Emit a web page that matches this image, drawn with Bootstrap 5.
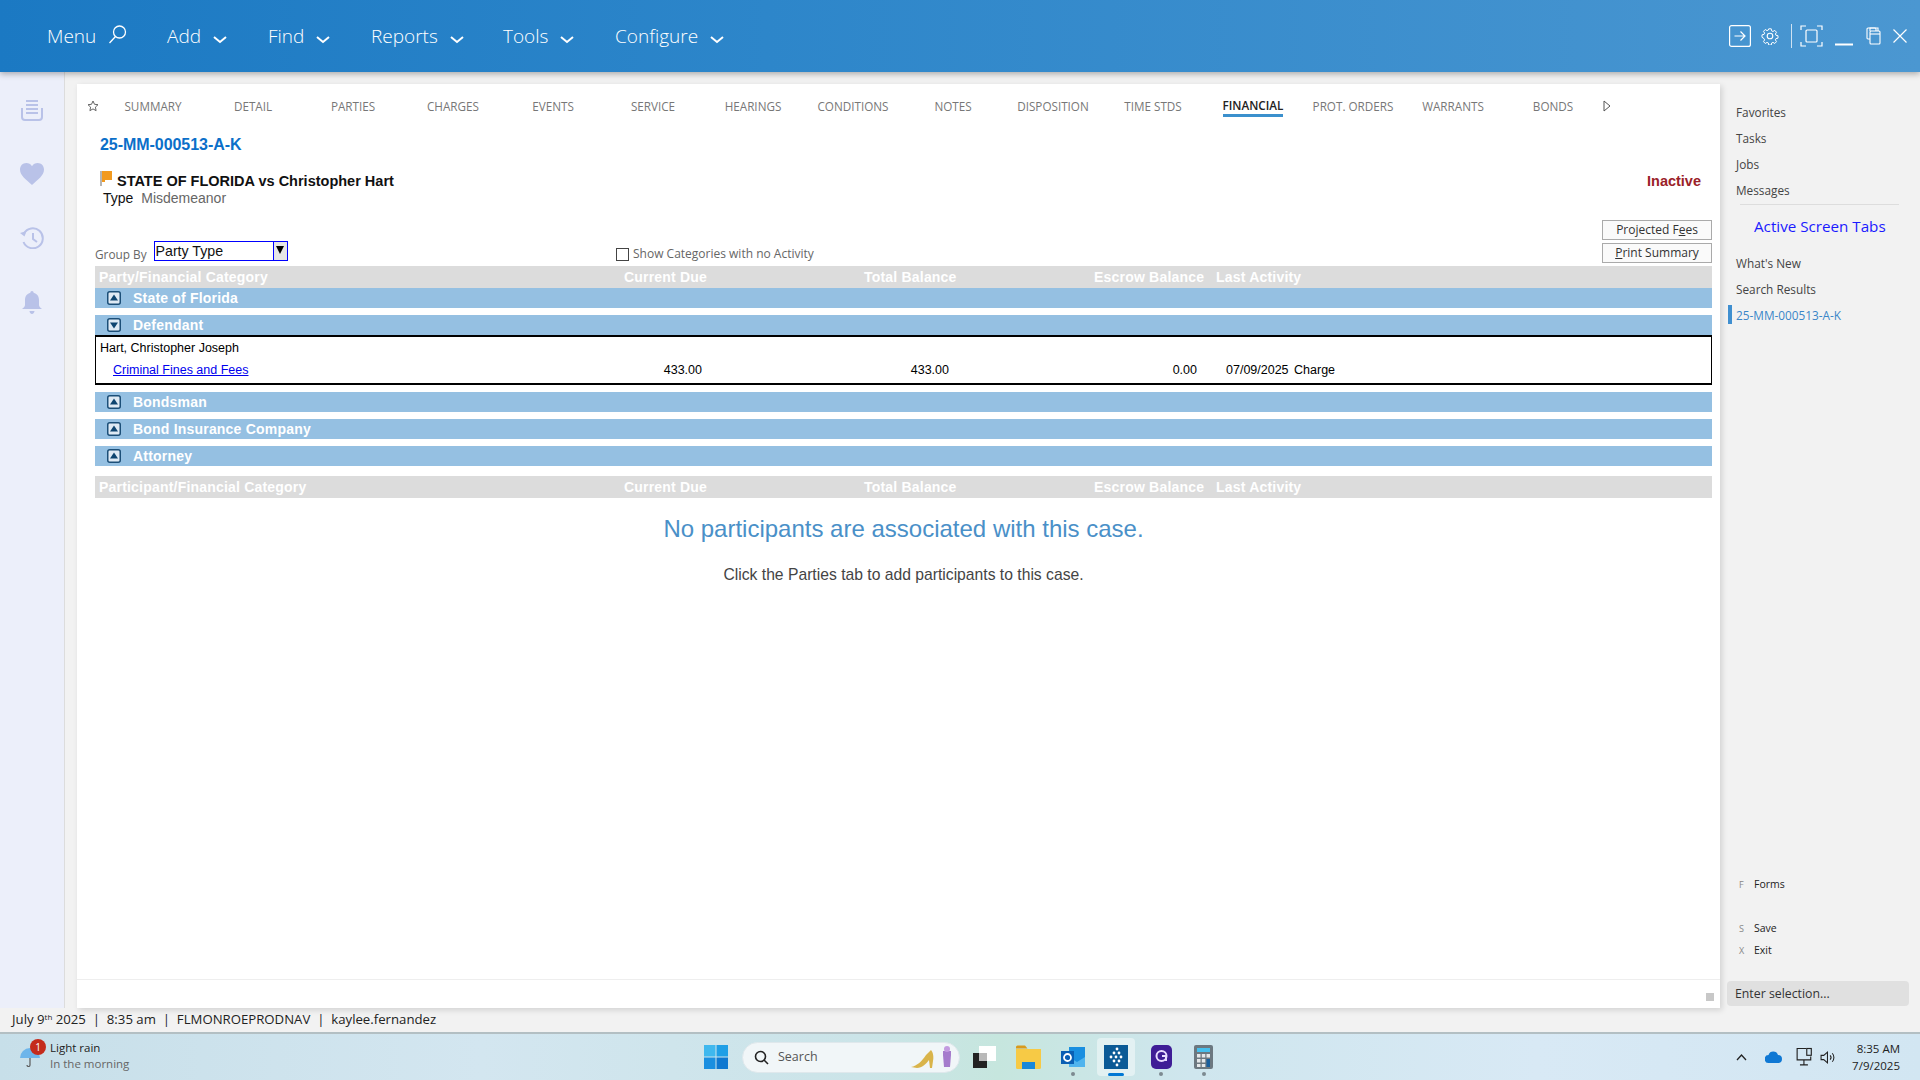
<!DOCTYPE html>
<html lang="en">
<head>
  <meta charset="UTF-8">
  <title>25-MM-000513-A-K Financial</title>
  <link href="https://cdn.jsdelivr.net/npm/bootstrap@5.3.0/dist/css/bootstrap.min.css" rel="stylesheet">
  <style>
    html, body { height: 1080px; overflow: hidden; }
    body { background: #f2f2f2; font-family: "Open Sans", sans-serif; color: #333; }

    /* top bar */
    .top-bar { height: 72px; background: linear-gradient(90deg, #1b79c3 0%, #2d86ca 40%, #4b97d1 100%); box-shadow: 0 2px 6px rgba(0,0,0,.3); position: relative; z-index: 2; color: #fff; }
    .top-menu { padding-left: 47px; font-size: 19px; font-weight: 300; }
    .top-menu > div { white-space: nowrap; }
    .top-menu svg { margin-left: 12px; vertical-align: -1px; }
    .menu-w1 { width: 120px; } .menu-w2 { width: 101px; } .menu-w3 { width: 103px; } .menu-w4 { width: 132px; } .menu-w5 { width: 112px; }
    .win-btns { padding-right: 13px; }
    .win-btns svg:nth-child(2) { margin-left: 10px; }
    .win-btns svg:nth-child(3) { margin-left: 12px; }
    .win-btns svg:nth-child(4) { margin-left: 8px; }
    .win-btns svg:nth-child(5) { margin-left: 12px; }
    .win-btns svg:nth-child(6) { margin-left: 13px; }
    .win-btns svg:nth-child(7) { margin-left: 12px; }

    /* main area */
    .main-area { height: 936px; }
    .left-rail { width: 65px; flex: none; background: #eceffa; border-right: 1px solid #dcdcdc; padding-top: 28px; }
    .left-rail svg { display: block; margin: 0 auto; }
    .rail-gap { margin-top: 42px !important; }
    .case-panel { width: 1643px; flex: none; margin: 12px 0 0 12px; background: #fff; box-shadow: 2px 2px 6px rgba(0,0,0,.14); position: relative; }
    .right-col { width: 200px; flex: none; padding-top: 27px; font-size: 11.8px; color: #444; }

    /* tabs */
    .tab-row { height: 44px; font-size: 11.7px; color: #777; padding-left: 10px; }
    .tab-star { width: 16px; flex: none; }
    .tab-cell { width: 100px; text-align: center; white-space: nowrap; flex: none; }
    .tab-on { color: #222; font-weight: 600; border-bottom: 3px solid #3b90cd; padding-bottom: 1px; }
    .tab-txt { display: inline-block; line-height: 15px; margin-top: 2px; }

    .case-body { padding: 0 8px 0 18px; font-family: "Liberation Sans", sans-serif; }
    .case-no { color: #0b6fc9; font-weight: 700; font-size: 16px; line-height: 20px; padding-left: 5px; margin-top: 7px; letter-spacing: -.05px; }
    .case-head { margin-top: 16px; padding-right: 11px; }
    .case-title { font-weight: 700; font-size: 14.5px; color: #111; line-height: 20px; margin-left: 1px; }
    .case-type { font-size: 14px; line-height: 16px; padding-left: 8px; color: #111; margin-top: -1px; }
    .case-type span { color: #666; margin-left: 4px; }
    .inactive-txt { font-weight: 700; font-size: 14.5px; color: #9a2128; }

    .group-area { height: 48px; margin-top: 12px; }
    .group-left { width: 521px; flex: none; height: 48px; padding-bottom: 2px; }
    .group-lbl { font-size: 11.8px; color: #666; font-family: "Open Sans", sans-serif; }
    .group-box { width: 134px; height: 20px; border: 1px solid #00f; font-size: 14.2px; color: #111; line-height: 18px; padding-left: 1px; margin: 0 0 3px 7px; }
    .group-arrow { width: 14px; height: 18px; background: #e6e6e6; border-left: 1px solid #00f; }
    .no-act { font-size: 12px; color: #666; font-family: "Open Sans", sans-serif; padding-bottom: 5px; }
    .no-act i { display: inline-block; width: 13px; height: 13px; border: 1px solid #444; }
    .no-act span { line-height: 14px; }
    .btn-stack { margin-top: 2px; gap: 3px; flex: none; }
    .side-btn { width: 110px; height: 20px; border: 1px solid #aaa; background: #fafafa; font: 12px/18px "Open Sans", sans-serif; color: #333; text-align: center; }

    /* grid */
    .grid-row { display: grid; grid-template-columns: 525px 240px 230px 122px 1fr; }
    .grid-head { height: 22px; background: #dcdcdc; color: #fff; font-weight: 700; font-size: 14px; line-height: 22px; letter-spacing: .2px; }
    .grid-head > div { padding-left: 4px; white-space: nowrap; }
    .head-low { margin-top: 10px; }
    .party-bar { height: 20px; background: #95c0e2; color: #fff; font-weight: 700; font-size: 14px; line-height: 20px; margin-top: 7px; padding-left: 12px; letter-spacing: .2px; }
    .party-first { margin-top: 0; }
    .party-bar svg { margin-right: 12px; flex: none; }
    .party-box { height: 50px; border: 1px solid #000; border-width: 2px 1px; font-size: 12.5px; color: #000; }
    .party-name { padding: 2px 0 0 4px; line-height: 18px; height: 23px; }
    .party-line { line-height: 18px; padding-top: 1px; }
    .party-line a { color: #00e; margin-left: 17px; }
    .amt-a { padding-right: 159px; text-align: right; }
    .amt-b { padding-right: 142px; text-align: right; }
    .amt-c { padding-right: 16px; text-align: right; }
    .amt-d { padding-left: 13px; white-space: nowrap; }
    .amt-d span { margin-left: 2px; }
    .none-big { color: #4a90c8; font-size: 24px; line-height: 30px; margin-top: 16px; }
    .none-small { color: #444; font-size: 15.7px; line-height: 20px; margin-top: 21px; }
    .panel-foot { position: absolute; left: 0; right: 0; bottom: 0; height: 29px; border-top: 1px solid #eee; }
    .panel-foot i { position: absolute; right: 6px; top: 13px; width: 8px; height: 8px; background: #c8c8c8; }

    /* right column */
    .side-link { height: 26px; line-height: 26px; padding-left: 16px; white-space: nowrap; }
    .side-on { color: #3a86c8; position: relative; }
    .side-on::before { content: ""; position: absolute; left: 8px; top: 3px; width: 4px; height: 19px; background: #3f8fd0; }
    .side-rule { border-top: 1px solid #ddd; margin: 1px 21px 0 20px; }
    .side-title { color: #1a1aff; font-size: 15.2px; line-height: 20px; padding-left: 34px; margin: 11px 0 14px; }
    .key-row { font-size: 10.5px; height: 22px; line-height: 22px; color: #222; }
    .key-row b { font-weight: 400; color: #888; width: 34px; padding-left: 19px; display: inline-block; font-size: 9px; }
    .key-gap { margin-top: 22px; }
    .enter-box { height: 25px; margin: 20px 11px 2px 7px; border-radius: 4px; background: #e0e0e0; font-size: 12.3px; line-height: 26px; padding-left: 8px; color: #333; }

    /* status + taskbar */
    .status-row { height: 24px; line-height: 23px; padding-left: 12px; font-size: 13.2px; color: #222; white-space: nowrap; }
    .status-row sup { font-size: 8px; top: -.5em; }
    .task-bar { height: 48px; border-top: 2px solid #b3bfc3; background: linear-gradient(90deg, #c7dfe9 0%, #d3e6f0 25%, #cbe4e8 45%, #c6e6de 52%, #cfe6ee 62%, #d8e9f5 80%, #d2e6f2 100%); position: relative; font-size: 12px; color: #222; }
    .weather { width: 700px; padding-left: 20px; flex: none; }
    .weather-txt { line-height: 16px; margin: -2px 0 0 10px; font-size: 11.5px; }
    .weather-txt span { color: #666; display: block; }
    .rain-dot { position: absolute; left: 30px; top: 5px; width: 16px; height: 16px; border-radius: 50%; background: #c42b1c; color: #fff; font-size: 10px; line-height: 16px; text-align: center; }
    .win-logo { margin-left: 4px; flex: none; }
    .search-pill { width: 218px; height: 31px; margin-left: 14px; border-radius: 16px; background: #f1f6f8; border: 1px solid #dfe8ec; padding-left: 11px; color: #555; font-size: 12.5px; flex: none; }
    .search-pill span { margin-left: 9px; }
    .search-deco { margin-left: 93px; }
    .task-app { flex: none; height: 38px; display: flex; align-items: center; justify-content: center; position: relative; }
    .app-1 { width: 24px; margin-left: 12px; }
    .app-2 { width: 25px; margin-left: 20px; }
    .app-3 { width: 24px; margin-left: 20px; }
    .app-4 { width: 38px; margin-left: 12px; }
    .app-5 { width: 22px; margin-left: 15px; }
    .app-6 { width: 19px; margin-left: 22px; }
    .app-on { background: rgba(255,255,255,.45); border-radius: 4px; }
    .app-on::after { content: ""; position: absolute; bottom: 0; left: 11px; width: 16px; height: 3px; border-radius: 2px; background: #0078d4; }
    .app-dot::after { content: ""; position: absolute; bottom: 0; left: 50%; margin-left: -2px; width: 4px; height: 4px; border-radius: 50%; background: #7c8a90; }
    .tray { margin-left: auto; padding-right: 20px; }
    .tray-cloud { margin-left: 18px; }
    .tray-net { margin-left: 14px; }
    .tray-vol { margin-left: 7px; }
    .clock { text-align: right; line-height: 17px; font-size: 11.5px; margin-left: 16px; }
  </style>
</head>
<body>

<!-- top bar -->
<div class="top-bar d-flex align-items-center justify-content-between">
  <div class="top-menu d-flex align-items-center">
    <div class="menu-w1">Menu<svg width="19" height="19" viewBox="0 0 19 19" fill="none" stroke="#fff" stroke-width="1.3"><circle cx="11.5" cy="7" r="6"/><path d="M7.5 11.5 1.5 18"/></svg></div>
    <div class="menu-w2">Add<svg width="14" height="8" viewBox="0 0 14 8" fill="none" stroke="#fff" stroke-width="2"><path d="m1 1 6 5 6-5"/></svg></div>
    <div class="menu-w3">Find<svg width="14" height="8" viewBox="0 0 14 8" fill="none" stroke="#fff" stroke-width="2"><path d="m1 1 6 5 6-5"/></svg></div>
    <div class="menu-w4">Reports<svg width="14" height="8" viewBox="0 0 14 8" fill="none" stroke="#fff" stroke-width="2"><path d="m1 1 6 5 6-5"/></svg></div>
    <div class="menu-w5">Tools<svg width="14" height="8" viewBox="0 0 14 8" fill="none" stroke="#fff" stroke-width="2"><path d="m1 1 6 5 6-5"/></svg></div>
    <div>Configure<svg width="14" height="8" viewBox="0 0 14 8" fill="none" stroke="#fff" stroke-width="2"><path d="m1 1 6 5 6-5"/></svg></div>
  </div>
  <div class="win-btns d-flex align-items-center">
    <svg width="22" height="22" viewBox="0 0 22 22" fill="none" stroke="#fff" stroke-width="1.2"><rect x=".6" y=".6" width="20.8" height="20.8" rx="2"/><path d="M5.5 11h10M11.5 6.5l4.5 4.5-4.5 4.5"/></svg>
    <svg width="18" height="18" viewBox="0 0 18 18" fill="none" stroke="#fff" stroke-width="1.1"><circle cx="9" cy="9" r="2.8"/><path d="M7.6 1h2.8l.4 2.3 1.5.7 2-1.2 1.9 2-1.2 2 .6 1.4 2.3.5v2.7l-2.3.5-.6 1.4 1.2 2-1.9 2-2-1.2-1.5.7-.4 2.3H7.6l-.4-2.3-1.5-.7-2 1.2-1.9-2 1.2-2-.6-1.4L.1 10.400V7.700l2.300-.5.6-1.400-1.200-2 1.900-2 2 1.200 1.500-.7z" transform="translate(.9 .9) scale(.9)"/></svg>
    <svg width="1" height="24" viewBox="0 0 1 24"><path d="M.5 0v24" stroke="#cfe2f2"/></svg>
    <svg width="23" height="22" viewBox="0 0 23 22" fill="none" stroke="#fff" stroke-width="1.2"><path d="M1 5V1h5M17 1h5v4M22 17v4h-5M6 21H1v-4"/><rect x="6" y="5" width="11" height="12" rx="1"/></svg>
    <svg width="18" height="20" viewBox="0 0 18 20"><path d="M0 18.500h18" stroke="#fff" stroke-width="2"/></svg>
    <svg width="15" height="18" viewBox="0 0 15 18" fill="none" stroke="#fff" stroke-width="1.100"><path d="M4 4V1h8v3"/><rect x="1" y="1" width="9" height="11" rx="1"/><rect x="4" y="4" width="10" height="13" rx="1" fill="#4a96d0"/><path d="M4 7h10"/></svg>
    <svg width="14" height="14" viewBox="0 0 14 14" fill="none" stroke="#fff" stroke-width="1.200"><path d="M.5.5l13 13M13.500.5l-13 13"/></svg>
  </div>
</div>

<div class="main-area d-flex">
  <!-- left rail -->
  <div class="left-rail">
    <svg width="22" height="21" viewBox="0 0 22 21" fill="none" stroke="#b9c2e8" stroke-width="2"><path d="M5 1h12M5 5h12M5 9h12M5 13h12"/><path d="M1 8v9a3 3 0 0 0 3 3h14a3 3 0 0 0 3-3V8"/></svg>
    <svg class="rail-gap" width="24" height="22" viewBox="0 0 24 22" fill="#b9c2e8"><path d="M12 22C6 16.500 0 12.500 0 6.500 0 2.800 2.800 0 6.300 0 8.600 0 10.800 1.200 12 3.200 13.200 1.200 15.400 0 17.700 0 21.200 0 24 2.800 24 6.500 24 12.500 18 16.500 12 22z"/></svg>
    <svg class="rail-gap" width="24" height="22" viewBox="0 0 24 22" fill="none" stroke="#b9c2e8" stroke-width="2"><path d="M4 6.500A10 10 0 1 1 3.500 15"/><path d="M0 6l4.500 3.500L6.500 4" fill="#b9c2e8" stroke="none"/><path d="M13 6v6l4 3"/></svg>
    <svg class="rail-gap" width="20" height="23" viewBox="0 0 20 23" fill="#b9c2e8"><path d="M10 0c1 0 1.600.8 1.600 1.800C15 2.600 17 5.500 17 9v5c0 1.500 1.200 2.800 3 4H0c1.800-1.200 3-2.500 3-4V9c0-3.500 2-6.400 5.400-7.200C8.400.8 9 0 10 0zM7.500 20h5c0 1.500-1.100 3-2.500 3s-2.500-1.500-2.500-3z"/></svg>
  </div>

  <!-- case panel -->
  <div class="case-panel">
    <div class="tab-row d-flex align-items-center">
      <div class="tab-star"><svg class="d-block" width="12" height="12" viewBox="0 0 12 12" fill="none" stroke="#666"><path d="M6 1l1.500 3.300 3.500.4-2.600 2.400.7 3.600L6 8.900l-3.100 1.800.7-3.600L1 4.700l3.500-.4z"/></svg></div>
      <div class="tab-cell"><span class="tab-txt">SUMMARY</span></div>
      <div class="tab-cell"><span class="tab-txt">DETAIL</span></div>
      <div class="tab-cell"><span class="tab-txt">PARTIES</span></div>
      <div class="tab-cell"><span class="tab-txt">CHARGES</span></div>
      <div class="tab-cell"><span class="tab-txt">EVENTS</span></div>
      <div class="tab-cell"><span class="tab-txt">SERVICE</span></div>
      <div class="tab-cell"><span class="tab-txt">HEARINGS</span></div>
      <div class="tab-cell"><span class="tab-txt">CONDITIONS</span></div>
      <div class="tab-cell"><span class="tab-txt">NOTES</span></div>
      <div class="tab-cell"><span class="tab-txt">DISPOSITION</span></div>
      <div class="tab-cell"><span class="tab-txt">TIME STDS</span></div>
      <div class="tab-cell"><span class="tab-txt tab-on">FINANCIAL</span></div>
      <div class="tab-cell"><span class="tab-txt">PROT. ORDERS</span></div>
      <div class="tab-cell"><span class="tab-txt">WARRANTS</span></div>
      <div class="tab-cell"><span class="tab-txt">BONDS</span></div>
      <svg width="8" height="12" viewBox="0 0 8 12" fill="none" stroke="#555"><path d="M1 1l6 5-6 5z"/></svg>
    </div>

    <div class="case-body">
      <div class="case-no">25-MM-000513-A-K</div>

      <div class="case-head d-flex justify-content-between align-items-start">
        <div>
          <div class="d-flex align-items-start">
            <svg class="me-1 ms-1" width="13" height="15" viewBox="0 0 13 15"><path d="M1 0h2v15H1z" fill="#b5b5b5"/><path d="M3 0h10v9H6v2H3z" fill="#f29a1f"/></svg>
            <div class="case-title">STATE OF FLORIDA vs Christopher Hart</div>
          </div>
          <div class="case-type">Type <span>Misdemeanor</span></div>
        </div>
        <div class="inactive-txt">Inactive</div>
      </div>

      <div class="group-area d-flex">
        <div class="group-left d-flex align-items-end">
          <span class="group-lbl">Group By</span>
          <div class="group-box d-flex justify-content-between">Party Type
            <span class="group-arrow d-flex justify-content-center"><svg class="mt-1" width="8" height="8" viewBox="0 0 8 8"><path d="M0 0h8L4 8z" fill="#000"/></svg></span>
          </div>
        </div>
        <div class="no-act d-flex align-items-end flex-grow-1"><i class="me-1"></i><span>Show Categories with no Activity</span></div>
        <div class="btn-stack d-flex flex-column">
          <div class="side-btn">Projected F<u>e</u>es</div>
          <div class="side-btn"><u>P</u>rint Summary</div>
        </div>
      </div>

      <div class="grid-row grid-head">
        <div>Party/Financial Category</div><div>Current Due</div><div>Total Balance</div><div>Escrow Balance</div><div>Last Activity</div>
      </div>

      <div class="party-bar party-first d-flex align-items-center">
        <svg width="14" height="14" viewBox="0 0 14 14"><rect x=".75" y=".75" width="12.500" height="12.500" rx="2" fill="#dfeaf4" stroke="#1c4f78" stroke-width="1.500"/><path d="M7 3.500l4 6H3z" fill="#0f4570"/></svg>State of Florida
      </div>
      <div class="party-bar d-flex align-items-center">
        <svg width="14" height="14" viewBox="0 0 14 14"><rect x=".75" y=".75" width="12.500" height="12.500" rx="2" fill="#dfeaf4" stroke="#1c4f78" stroke-width="1.500"/><path d="M7 10.500l4-6H3z" fill="#0f4570"/></svg>Defendant
      </div>
      <div class="party-box">
        <div class="party-name">Hart, Christopher Joseph</div>
        <div class="grid-row party-line">
          <div><a href="#">Criminal Fines and Fees</a></div>
          <div class="amt-a">433.00</div>
          <div class="amt-b">433.00</div>
          <div class="amt-c">0.00</div>
          <div class="amt-d">07/09/2025 <span>Charge</span></div>
        </div>
      </div>
      <div class="party-bar d-flex align-items-center">
        <svg width="14" height="14" viewBox="0 0 14 14"><rect x=".75" y=".75" width="12.500" height="12.500" rx="2" fill="#dfeaf4" stroke="#1c4f78" stroke-width="1.500"/><path d="M7 3.500l4 6H3z" fill="#0f4570"/></svg>Bondsman
      </div>
      <div class="party-bar d-flex align-items-center">
        <svg width="14" height="14" viewBox="0 0 14 14"><rect x=".75" y=".75" width="12.500" height="12.500" rx="2" fill="#dfeaf4" stroke="#1c4f78" stroke-width="1.500"/><path d="M7 3.500l4 6H3z" fill="#0f4570"/></svg>Bond Insurance Company
      </div>
      <div class="party-bar d-flex align-items-center">
        <svg width="14" height="14" viewBox="0 0 14 14"><rect x=".75" y=".75" width="12.500" height="12.500" rx="2" fill="#dfeaf4" stroke="#1c4f78" stroke-width="1.500"/><path d="M7 3.500l4 6H3z" fill="#0f4570"/></svg>Attorney
      </div>

      <div class="grid-row grid-head head-low">
        <div>Participant/Financial Category</div><div>Current Due</div><div>Total Balance</div><div>Escrow Balance</div><div>Last Activity</div>
      </div>

      <div class="none-big text-center">No participants are associated with this case.</div>
      <div class="none-small text-center">Click the Parties tab to add participants to this case.</div>
    </div>

    <div class="panel-foot"><i></i></div>
  </div>

  <!-- right column -->
  <div class="right-col d-flex flex-column">
    <div class="side-link">Favorites</div>
    <div class="side-link">Tasks</div>
    <div class="side-link">Jobs</div>
    <div class="side-link">Messages</div>
    <div class="side-rule"></div>
    <div class="side-title">Active Screen Tabs</div>
    <div class="side-link">What's New</div>
    <div class="side-link">Search Results</div>
    <div class="side-link side-on">25-MM-000513-A-K</div>
    <div class="mt-auto">
      <div class="key-row"><b>F</b>Forms</div>
      <div class="key-row key-gap"><b>S</b>Save</div>
      <div class="key-row"><b>X</b>Exit</div>
      <div class="enter-box">Enter selection...</div>
    </div>
  </div>
</div>

<div class="status-row">July 9<sup>th</sup> 2025 &nbsp;|&nbsp; 8:35 am &nbsp;|&nbsp; FLMONROEPRODNAV &nbsp;|&nbsp; kaylee.fernandez</div>

<!-- taskbar -->
<div class="task-bar d-flex align-items-center">
  <div class="weather d-flex align-items-center">
    <svg width="20" height="20" viewBox="0 0 20 20"><path d="M0 11a10 10 0 0 1 20 0z" fill="#6db5ea"/><path d="M10 11v7a1.500 1.500 0 0 1-3 0" fill="none" stroke="#5a5a5a" stroke-width="1.200"/></svg>
    <div class="weather-txt">Light rain<span>In the morning</span></div>
    <div class="rain-dot">1</div>
  </div>
  <svg class="win-logo" width="24" height="24" viewBox="0 0 24 24"><path d="M0 0h11.500v11.500H0z" fill="#3fb8ee"/><path d="M12.500 0H24v11.500H12.500z" fill="#1f9fe6"/><path d="M0 12.500h11.500V24H0z" fill="#1a8fe0"/><path d="M12.500 12.500H24V24H12.500z" fill="#0f78d0"/></svg>
  <div class="search-pill d-flex align-items-center">
    <svg width="15" height="15" viewBox="0 0 15 15" fill="none" stroke="#222" stroke-width="1.600"><circle cx="6.500" cy="6.500" r="5"/><path d="M10 10l4 4"/></svg>
    <span>Search</span>
    <svg class="search-deco" width="44" height="24" viewBox="0 0 44 24"><path d="M0 22c6-1 11-6 15-12l5-5c2 2 3 7 2 11l-1 7h-2l-1-8c-3 4-7 8-12 8z" fill="#d9b44a"/><path d="M32 6h8v4l-1 12h-6l-1-12z" fill="#a57ccc"/><circle cx="36" cy="4" r="3" fill="#c39be0"/></svg>
  </div>
  <div class="task-app app-1"><svg width="24" height="22" viewBox="0 0 24 22"><path d="M7 0h17v15H7z" fill="#fff"/><path d="M1 7h14v15H1z" fill="#222"/><path d="M7 7h8v8H7z" fill="#b9b9b9"/></svg></div>
  <div class="task-app app-2"><svg width="25" height="24" viewBox="0 0 25 24"><path d="M0 2a1.500 1.500 0 0 1 1.500-1.500H9l2.500 3H0z" fill="#d89a1c"/><path d="M0 4h25v18.500a1.500 1.500 0 0 1-1.500 1.500h-22A1.500 1.500 0 0 1 0 22.500z" fill="#f7ca45"/><path d="M6 17h13v7H6z" fill="#1a88d8"/></svg></div>
  <div class="task-app app-3 app-dot"><svg width="24" height="24" viewBox="0 0 24 24"><path d="M8 2h16v20H8z" fill="#1a8fe0"/><path d="M8 12l8 5 8-5v10H8z" fill="#50b4ee"/><path d="M0 6h13v13H0z" fill="#0a5fb4"/><circle cx="6.500" cy="12.500" r="3.500" fill="none" stroke="#fff" stroke-width="1.800"/></svg></div>
  <div class="task-app app-4 app-on"><svg width="24" height="24" viewBox="0 0 24 24"><path d="M0 0h24v24H0z" fill="#0a5a96"/><g fill="#fff"><circle cx="13" cy="4" r="1.400"/><circle cx="10" cy="8" r="1.400"/><circle cx="15" cy="8" r="1.400"/><circle cx="7" cy="12" r="1.400"/><circle cx="12" cy="12" r="1.400"/><circle cx="17" cy="12" r="1.400"/><circle cx="10" cy="16" r="1.400"/><circle cx="15" cy="16" r="1.400"/><circle cx="13" cy="20" r="1.400"/></g></svg></div>
  <div class="task-app app-5 app-dot"><svg width="21" height="24" viewBox="0 0 21 24"><rect width="21" height="24" rx="5" fill="#3f1d96"/><circle cx="10.500" cy="11" r="5" fill="none" stroke="#e8dcff" stroke-width="2"/><path d="M11 11h4v5" fill="none" stroke="#e8dcff" stroke-width="2"/></svg></div>
  <div class="task-app app-6 app-dot"><svg width="19" height="24" viewBox="0 0 19 24"><rect width="19" height="24" rx="2" fill="#6c7880"/><path d="M3 3h13v4H3z" fill="#47c0ee"/><path d="M3 9h3.500v3.500H3zM7.800 9h3.500v3.500H7.800zM12.500 9H16v3.500h-3.500zM3 14h3.500v3.500H3zM7.800 14h3.500v3.500H7.800zM3 19h3.500v3H3zM7.800 19h3.500v3H7.800z" fill="#e5e8ea"/><path d="M12.500 14H16v8h-3.500z" fill="#1a5f9c"/></svg></div>

  <div class="tray d-flex align-items-center">
    <svg width="11" height="7" viewBox="0 0 11 7" fill="none" stroke="#222" stroke-width="1.300"><path d="M1 6l4.500-5L10 6"/></svg>
    <svg class="tray-cloud" width="17" height="12" viewBox="0 0 17 12"><path d="M4 12a4 4 0 0 1-.5-8A5 5 0 0 1 13 4a4 4 0 0 1 0 8z" fill="#0f78d4"/></svg>
    <svg class="tray-net" width="17" height="20" viewBox="0 0 15 17" fill="none" stroke="#222"><path d="M9 1H1v10h12V8M7 11v4M3.500 15.500h7"/><rect x="9.500" y="1" width="4" height="6"/></svg>
    <svg class="tray-vol" width="16" height="15" viewBox="0 0 15 14" fill="none" stroke="#222"><path d="M1 5h2.500L7 2v10L3.500 9H1zM9.500 5a3 3 0 0 1 0 4M11.500 3a6 6 0 0 1 0 8"/></svg>
    <div class="clock">8:35 AM<br>7/9/2025</div>
  </div>
</div>

</body>
</html>
